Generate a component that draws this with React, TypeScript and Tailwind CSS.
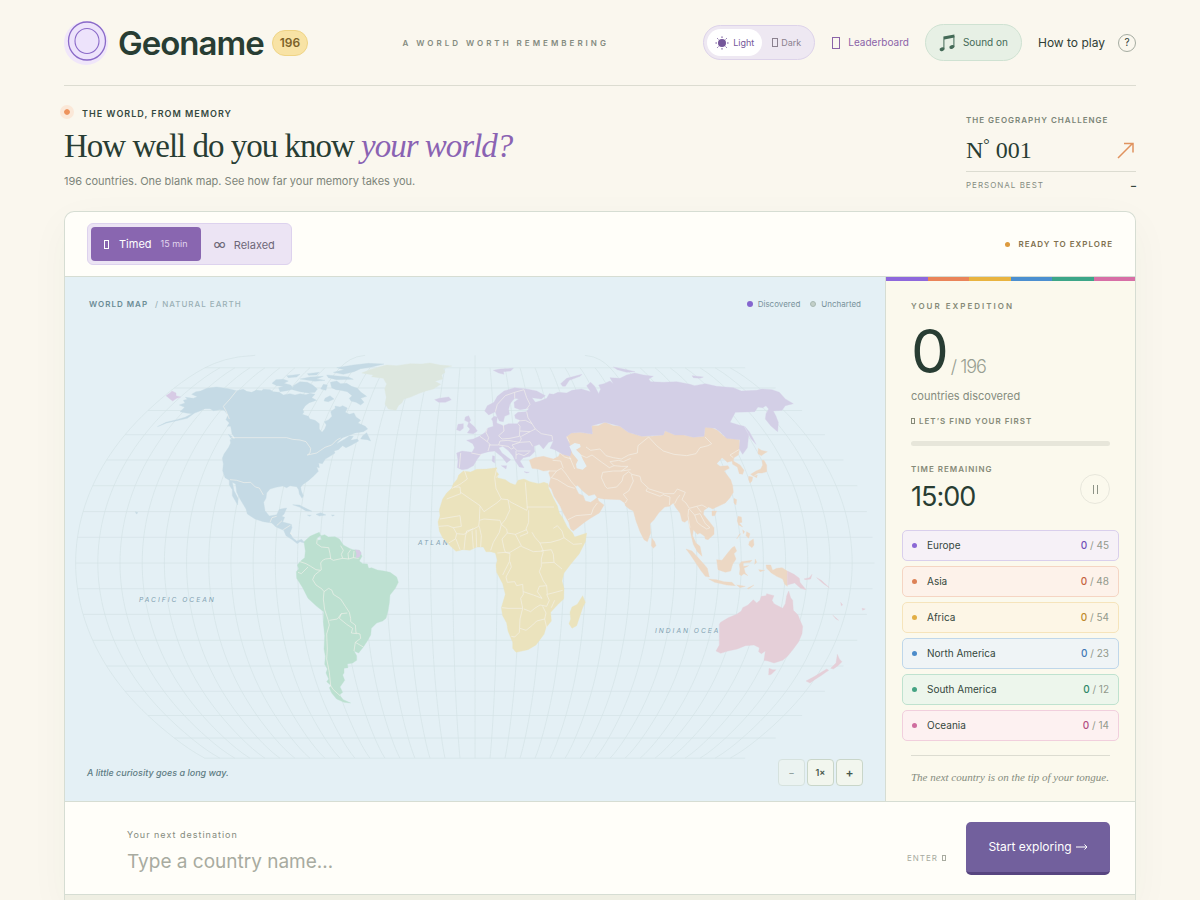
import type { FormEvent, ReactNode } from 'react';
import { useState } from 'react';
import clsx from 'clsx';

interface Region {
  name: string;
  found: number;
  total: number;
  row: string;
  dot: string;
  count: string;
}

interface LandGroup {
  name: string;
  fill: string;
  origin: string;
  land: string;
  borders?: string;
}

const regions: Region[] = [
  { name: 'Europe', found: 0, total: 45, row: 'bg-[#f6f1f7] border-[#d9cfec]', dot: 'bg-[#8b68d5]', count: 'text-[#7150b8]' },
  { name: 'Asia', found: 0, total: 48, row: 'bg-[#fdf2ea] border-[#f5d5c3]', dot: 'bg-[#dd8257]', count: 'text-[#c5633f]' },
  { name: 'Africa', found: 0, total: 54, row: 'bg-[#fdf6e6] border-[#f6e4bb]', dot: 'bg-[#e2ae45]', count: 'text-[#bf8a2c]' },
  { name: 'North America', found: 0, total: 23, row: 'bg-[#eff4f6] border-[#bfd7ea]', dot: 'bg-[#4b8bca]', count: 'text-[#3f78b5]' },
  { name: 'South America', found: 0, total: 12, row: 'bg-[#edf6ec] border-[#bfe2cf]', dot: 'bg-[#45a383]', count: 'text-[#2f8868]' },
  { name: 'Oceania', found: 0, total: 14, row: 'bg-[#fdf1f1] border-[#f1cfdd]', dot: 'bg-[#cf6d9f]', count: 'text-[#b34f82]' },
];

const spectrum = ['bg-[#8e68dc]', 'bg-[#ea8459]', 'bg-[#e9b440]', 'bg-[#4b8fd0]', 'bg-[#3ca688]', 'bg-[#d76fa6]'];

// Map units are a third of a pixel at the default panel width.
const MAP_W = 2460;
const MAP_H = 1572;
const CENTER_X = 1230;
const EQUATOR_Y = 858;
const SCALE = 438;

// Natural Earth projection
const project = (lon: number, lat: number) => {
  const l = (lon * Math.PI) / 180;
  const p = (lat * Math.PI) / 180;
  const p2 = p * p;
  const p4 = p2 * p2;
  const x = l * (0.8707 - 0.131979 * p2 + p4 * (-0.013791 + p4 * (0.003971 * p2 - 0.001529 * p4)));
  const y = p * (1.007226 + p2 * (0.015085 + p4 * (-0.044475 + 0.028874 * p2 - 0.005916 * p4)));
  return `${(CENTER_X + x * SCALE).toFixed(1)} ${(EQUATOR_Y - y * SCALE).toFixed(1)}`;
};

const buildGraticule = () => {
  const lines: string[] = [];
  for (let lon = -180; lon < 180; lon += 10) {
    const top = lon % 90 === 0 ? 90 : 80;
    const points: string[] = [];
    for (let lat = -80; lat <= top; lat += 2.5) points.push(project(lon, lat));
    lines.push('M' + points.join('L'));
  }
  for (let lat = -80; lat <= 80; lat += 10) {
    lines.push(`M${project(-180, lat)}L${project(180, lat)}`);
  }
  return lines.join('');
};

const graticule = buildGraticule();

const lands: LandGroup[] = [
  {
    name: 'Greenland',
    fill: '#dde7df',
    origin: 'translate(945 186)',
    land: 'M0 83L20 78L50 80L90 74L125 75L150 72L180 78L215 81L190 88L195 100L185 108L188 120L165 127L182 136L160 150L140 155L120 162L90 175L72 180L65 192L55 200L48 214L25 210L15 195L19 175L14 150L20 135L10 118L-25 113L-20 108L-55 102L-30 92Z',
  },
  {
    name: 'North America',
    fill: '#c5dae5',
    origin: 'translate(15 186)',
    land: 'M328 198L345 192L340 184L352 181L346 175L370 178L382 173L365 166L378 158L392 156L410 148L440 144L475 149L500 155L520 151L530 157L545 160L560 153L575 155L580 151L600 152L610 158L628 160L640 168L660 164L675 168L690 164L708 167L720 163L735 166L725 176L740 184L718 191L706 200L698 212L702 219L697 226L715 232L720 240L735 244L748 254L748 270L756 280L764 270L769 258L763 248L776 242L786 232L782 218L796 208L795 201L810 204L818 200L832 207L826 220L838 226L852 222L858 234L872 244L864 252L886 262L893 270L880 278L855 282L840 288L818 296L804 308L800 314L825 300L838 291L850 292L842 304L862 300L866 306L845 318L828 326L818 320L805 332L792 336L795 342L780 352L766 360L757 374L746 372L748 386L740 384L745 397L732 410L715 425L698 437L692 445L694 456L700 470L696 478L688 465L686 452L680 443L660 440L650 446L638 441L618 445L600 450L590 462L588 478L581 490L585 515L598 531L620 527L628 511L650 507L642 526L635 532L644 535L638 549L664 556L666 566L660 582L668 596L680 606L695 601L705 612L690 608L682 614L665 601L648 590L641 574L618 564L605 552L580 548L555 540L532 525L528 510L510 480L500 460L497 435L487 430L492 455L504 478L503 498L495 484L487 470L487 452L478 438L478 424L465 416L458 395L460 375L457 358L462 345L476 325L482 312L480 302L495 298L486 284L482 262L472 262L478 252L468 242L474 228L462 213L448 212L430 215L420 209L404 209L390 216L374 222L352 238L320 245L290 252L262 263L288 250L320 242L345 235L366 224L348 222L330 218L344 205ZM781 130L800 126L812 134L830 133L845 142L862 148L873 160L890 172L872 178L882 190L872 198L858 190L843 186L838 178L846 170L832 158L812 154L798 152L785 146ZM670 140L690 128L712 130L728 138L742 150L735 160L715 162L690 158L668 152ZM606 133L618 122L640 121L655 126L642 133L662 138L672 150L650 155L630 158L626 146L640 142L620 140ZM790 100L822 92L800 86L850 78L895 73L942 75L905 84L872 89L852 98L820 106ZM690 120L720 114L760 112L740 120L765 124L735 127ZM760 136L772 138L768 154L752 150ZM770 108L835 114L850 121L800 122L775 116ZM650 110L690 106L680 114L655 116ZM712 104L748 100L740 108L716 109ZM765 178L780 170L792 180L775 188L762 186ZM872 300L878 290L890 281L896 293L902 306L892 302ZM668 497L688 498L706 507L726 517L708 516L690 505ZM738 526L752 521L768 528L748 531ZM712 528L724 529L718 532ZM196 518L204 521L199 525ZM784 528L793 528L789 532ZM475 286L488 294L492 306L484 300Z',
    borders: 'M500 155L480 180L460 202L468 216L478 240M484 296L650 296L668 301L690 303L708 308L722 328L720 342L712 348L740 342L765 325L785 318L800 303L812 297M480 422L500 424L522 431L542 430L556 444L568 447L580 468M600 550L606 536L620 532M620 560L636 545M640 572L662 558M660 582L668 588',
  },
  {
    name: 'South America',
    fill: '#bce0d0',
    origin: 'translate(645 726)',
    land: 'M72 68L90 52L105 45L118 40L122 50L112 56L114 64L124 62L122 50L134 47L145 54L165 53L178 60L190 78L208 88L218 92L238 94L246 112L238 126L248 134L262 135L266 148L275 146L292 153L312 156L330 160L350 174L355 190L346 208L330 228L328 252L324 276L318 298L308 306L290 312L274 328L272 348L262 366L250 384L236 402L222 396L230 410L230 424L218 432L202 435L204 446L192 448L192 462L188 468L194 484L180 504L188 520L178 528L190 542L212 552L192 550L170 540L155 522L148 506L154 500L140 488L146 480L138 462L142 450L134 436L136 412L132 390L134 350L130 310L131 278L110 262L84 238L68 206L50 178L49 158L56 150L52 138L62 126L74 116L76 96Z',
    borders: 'M112 58L110 74L124 84L146 86L150 104L152 118L136 120L128 124L122 132L124 152L104 168L98 182L108 198L126 210L132 218L146 208L156 214L160 226L182 240L196 262L208 280L212 298L212 308L226 318L228 342L240 345L242 358L226 370L222 396M60 128L78 134L92 142L108 152L122 154M54 160L64 164L84 144M150 118L160 124L188 118L184 106L190 94L182 80M188 118L206 120L204 104L212 92M206 120L220 116L222 96M220 116L236 118M132 218L130 240L134 272L144 302L148 318L140 345L142 390L140 420L148 460L152 500L160 512L180 530M148 304L172 300L184 284L202 282M184 284L178 298L200 316L218 328L214 342L230 344M226 370L250 384',
  },
  {
    name: 'French Guiana',
    fill: '#d7cbe5',
    origin: 'translate(645 726)',
    land: 'M226 92L238 94L244 102L238 114L228 116L230 104Z',
  },
  {
    name: 'Africa',
    fill: '#ebe3bd',
    origin: 'translate(645 726)',
    land: 'M474 8L480 -10L478 -28L488 -60L500 -78L515 -92L520 -106L532 -120L536 -132L550 -144L572 -141L590 -149L620 -150L650 -154L650 -142L656 -134L652 -124L676 -118L690 -108L706 -102L714 -116L732 -120L750 -112L776 -106L792 -110L804 -106L806 -92L820 -62L832 -40L838 -18L848 -4L862 24L878 42L884 54L920 42L916 68L898 104L872 136L852 162L846 186L852 208L851 240L832 258L812 280L814 306L798 326L792 346L768 378L744 392L708 400L698 388L698 370L684 336L680 312L668 290L664 266L676 226L668 194L650 160L648 138L652 124L646 102L632 98L618 98L610 84L590 84L570 94L548 92L528 97L508 78L488 56L478 36ZM908 230L916 250L908 266L900 290L890 320L876 328L867 314L872 300L870 280L876 264L892 256Z',
    borders: 'M554 -144L562 -120L540 -104L516 -92M522 -96L540 -96L542 -76L500 -60M542 -80L600 -40L612 -22L650 -48L664 -60L648 -92L644 -124L650 -150M648 -124L656 -132M664 -60L684 -58L690 -52L740 -26L742 -32L736 -110M740 -36L822 -36M746 -26L746 10L738 30L744 42L720 52M684 -58L690 -28L676 2L664 16L680 30L682 42L706 46L740 32M598 4L612 0L660 4L664 16M598 4L596 22L580 30L560 36L556 54L552 92M600 -38L598 4M540 -10L480 0M540 -10L544 22L520 26L504 20L476 22M520 26L530 44L552 46L580 28M530 44L526 60L506 72M528 60L540 92M576 34L580 88M588 32L590 84M598 22L604 50L602 84M664 16L658 40L640 70L632 94M682 42L666 60L672 88L676 100L652 102M706 46L724 80L690 100L676 100M724 82L760 98L790 96L780 72L764 54L756 40M780 72L812 70L840 62L852 56L846 36L832 20L820 28M852 56L880 76L906 74M790 98L784 120L784 142L778 158L790 186L800 200M784 96L814 92L820 106L822 130L786 132M822 130L846 150M676 100L690 104L688 128L676 152L668 168M690 128L694 144L678 174L682 190L704 188L710 200L728 196L730 226L722 238L728 268L684 268L666 266M730 218L760 228L786 238L772 218L778 202L800 200L802 226L818 222L848 214M800 226L808 244L800 262L780 258L764 268L752 278L732 270M728 268L720 300L718 340L704 354L694 352M720 328L738 334L758 318L770 306L794 300L798 282L788 262M794 300L800 326M814 266L824 244',
  },
  {
    name: 'Asia',
    fill: '#ecd8c4',
    origin: 'translate(1485 216)',
    land: 'M-92 334L-76 326L-50 322L-20 330L-4 322L0 312L30 322L25 280L18 264L34 252L60 250L97 255L95 230L115 230L135 220L160 230L180 232L205 250L245 262L275 262L310 258L315 245L345 258L372 258L400 265L432 262L435 235L450 234L472 244L492 262L510 268L538 272L540 295L535 318L522 326L520 336L540 348L552 364L548 376L538 374L532 354L518 346L516 336L502 340L494 332L486 326L470 344L480 352L504 350L508 358L492 366L512 392L518 410L520 430L510 446L496 462L470 474L458 480L446 474L432 484L430 496L448 518L462 536L462 556L444 572L436 570L434 562L420 552L412 556L400 542L398 560L408 582L420 592L426 622L412 608L400 586L394 562L390 540L384 512L374 520L366 516L360 492L346 474L340 462L328 472L314 474L296 492L282 512L270 524L272 552L262 578L252 572L240 548L228 516L220 486L208 480L196 470L194 462L180 452L130 450L112 446L104 436L86 440L66 424L52 408L46 414L56 434L70 440L76 456L92 460L106 450L112 444L116 456L132 468L118 492L94 506L76 518L40 546L32 540L26 520L12 496L0 470L-18 442L-26 420L-34 412L-28 388L-34 372L-30 364L-50 366L-66 360L-84 358ZM595 298L604 304L622 308L612 314L604 320L594 314ZM606 334L612 334L620 348L620 368L606 372L594 372L580 382L572 376L588 366L602 360L608 348ZM566 382L578 384L576 396L570 402L566 392ZM582 382L592 378L590 386ZM522 448L530 452L528 468L522 462ZM456 486L470 486L464 500L456 500ZM276 568L284 578L288 590L280 598L274 590Z',
    borders: 'M20 262L28 280M78 294L92 304L120 300L138 320L160 326L184 330L206 318L232 312L234 290L266 264M266 264L290 290L310 306L342 316L380 320L408 314L420 296L444 290L455 284L435 264M62 318L80 326L96 318L120 336L148 356L162 350L150 338L176 334L190 338L212 328M162 350L184 352L204 352L184 366L160 366L128 370L124 386L136 412L142 418L170 414L186 396L190 380L206 368L216 376L240 382L244 398L268 420L300 430L314 434L342 434L352 420L376 430L366 452L378 462L388 478L410 472L426 468L440 476M184 366L212 362M214 376L220 396L206 426L190 436L202 452L196 462M262 418L258 426L300 442L312 436M312 438L330 444L328 468M344 464L352 448L360 438M386 480L384 500L390 536M388 480L404 498L420 494L436 524L450 536L440 540L424 530M404 498L412 520L424 530M410 472L424 490M28 322L44 360M-36 366L-10 366L4 358L16 372L34 398L48 414M-10 366L-26 386L-8 392L24 412L44 418M-22 334L2 336L10 358M0 312L14 324L34 330M24 512L48 500L94 496L100 478L112 462M520 326L510 318L540 300',
  },
  {
    name: 'Island Asia',
    fill: '#ecd8c4',
    origin: 'translate(1605 666)',
    land: 'M258 150L276 156L296 178L312 196L322 208L328 234L316 232L302 214L286 190L270 166ZM326 240L350 242L372 248L396 250L406 260L380 258L344 250ZM350 182L366 184L380 166L396 146L404 142L410 156L402 164L408 180L398 196L392 216L376 220L354 212ZM418 196L424 188L456 184L450 190L430 192L430 202L446 200L432 208L436 222L444 230L432 224L424 230L418 226L420 210ZM498 198L512 198L518 214L530 208L546 206L562 216L562 262L554 256L548 240L530 232L514 222L500 208ZM414 52L424 54L426 70L418 72L428 84L416 78L412 66ZM448 128L460 120L462 138L456 146L446 138ZM428 92L434 98L430 104ZM440 98L450 104L446 118L438 110ZM418 106L422 104L410 120ZM410 258L436 262L420 266ZM442 268L462 258L446 270ZM466 180L470 190L464 196ZM476 212L494 214L480 218Z',
  },
  {
    name: 'Europe',
    fill: '#d3cfe6',
    origin: 'translate(945 186)',
    land: 'M230 342L246 336L276 340L284 326L278 314L260 304L280 300L298 292L316 280L322 268L340 262L338 246L334 240L342 232L352 234L350 252L370 260L386 254L412 254L420 244L406 238L404 228L414 220L438 218L448 208L420 212L404 206L402 190L416 180L404 178L390 194L386 210L388 226L374 232L370 248L358 246L350 230L346 218L326 228L314 216L322 200L342 190L352 172L372 156L404 146L440 150L470 156L496 170L484 180L456 176L466 190L480 186L500 178L508 164L520 166L534 160L560 162L576 154L604 150L632 158L620 140L632 130L644 142L656 164L662 150L656 138L672 134L690 126L700 134L690 116L720 118L740 108L764 102L790 108L820 112L806 120L812 128L850 130L890 128L930 136L944 140L976 134L1010 142L1060 146L1084 156L1130 154L1146 150L1176 152L1198 160L1216 180L1240 194L1216 200L1206 214L1180 216L1188 232L1195 250L1193 278L1172 260L1156 240L1158 224L1166 210L1158 200L1148 206L1134 204L1124 218L1066 220L1050 250L1076 258L1092 262L1106 288L1102 326L1088 346L1078 330L1080 302L1040 298L1020 278L1005 268L975 265L972 292L940 295L912 288L885 288L855 275L850 288L785 292L745 280L720 262L675 250L635 260L637 285L600 280L574 282L558 294L568 314L576 330L570 352L548 346L524 332L510 328L520 306L506 310L490 330L478 316L462 322L464 338L450 352L430 356L420 366L432 386L418 384L406 366L398 350L384 334L368 322L356 326L366 342L392 362L380 372L366 354L344 336L326 338L304 344L292 360L280 380L262 390L246 392L232 386L234 364ZM256 234L266 230L272 244L268 250L284 264L292 276L280 284L262 282L270 270L262 262L266 250L254 244ZM234 256L250 254L250 268L240 276L230 272ZM164 182L178 178L206 174L214 182L196 190L176 190ZM340 94L360 90L400 88L392 96L370 98L372 106L356 102ZM542 134L560 118L606 106L600 112L568 124L556 142L548 142ZM364 380L380 380L378 390ZM338 350L344 352L344 372L336 366ZM432 398L448 400L440 402ZM700 84L730 90L765 98L740 100L712 92ZM936 110L970 114L960 118L940 116ZM1094 262L1108 278L1120 300L1128 316L1112 298Z',
    borders: 'M274 342L304 348M242 342L238 386M300 292L322 308L330 316L324 336M322 268L318 280L326 296L322 308M370 258L372 276L356 290L366 300L390 298L418 292L420 262L414 254M326 318L356 318L360 306L384 304L418 310L424 300L420 290M356 318L384 322L394 330L402 326L412 336L452 336M402 326L396 318L420 310L450 308L458 322M420 276L450 278L466 270L456 254L436 244L414 246M466 270L484 284L516 290L518 304M450 278L424 292M440 218L444 236L456 254M346 218L352 196L376 170L404 160L404 178M432 152L440 176L450 196L440 210M404 160L432 152M408 348L416 344L432 350L448 340M408 336L408 360',
  },
  {
    name: 'Chukotka',
    fill: '#d7cbe5',
    origin: 'translate(15 186)',
    land: 'M288 170L300 162L306 156L318 162L318 170L332 174L320 178L308 186L300 180Z',
  },
  {
    name: 'Oceania',
    fill: '#e5cfd8',
    origin: 'translate(1605 666)',
    land: 'M358 376L362 370L385 356L410 346L424 336L428 326L444 318L460 302L470 312L480 304L484 292L498 290L500 284L522 290L516 304L522 314L548 328L556 314L560 290L566 276L572 296L578 304L580 334L594 348L600 364L608 382L606 404L596 428L580 450L564 470L548 484L522 492L504 486L492 484L494 470L496 456L484 464L476 458L478 446L462 438L436 440L412 450L384 456L362 463L348 456L358 438L358 412ZM507 508L518 512L528 512L514 526L506 528ZM712 466L718 480L726 488L714 500L700 510L692 508L708 492ZM680 510L686 514L666 528L644 542L630 552L618 546L644 532ZM562 216L582 226L598 238L600 250L618 272L602 268L584 252L562 258ZM612 240L628 236L636 226L632 240L618 242ZM650 236L664 244L688 266L670 254ZM722 310L728 318L724 320ZM786 328L796 330L788 334ZM698 348L716 364L708 360Z',
  },
];

// Outlined box shown where a glyph has no picture
const Glyph = ({ className }: { className: string }) => (
  <span aria-hidden="true" className={clsx('inline-block shrink-0 border border-current', className)} />
);

const SunIcon = () => (
  <svg viewBox="0 0 14 14" className="size-3.5" fill="currentColor" aria-hidden="true">
    <circle cx="7" cy="7" r="4" />
    <path
      d="M7 .4v1.6M7 12v1.6M.4 7H2M12 7h1.6M2.3 2.3l1.1 1.1M10.6 10.6l1.1 1.1M2.3 11.7l1.1-1.1M10.6 3.4l1.1-1.1"
      stroke="currentColor"
      strokeWidth="1"
    />
  </svg>
);

const NotesIcon = () => (
  <svg viewBox="0 0 16 18" className="h-[18px] w-4" fill="currentColor" aria-hidden="true">
    <path d="M4.4 2.6 15.4.4v3L5.4 5.4v9.2h-1z" />
    <path d="M14.4 2h1v11h-1z" />
    <ellipse cx="3.1" cy="15.2" rx="2.6" ry="1.8" transform="rotate(-20 3.1 15.2)" />
    <ellipse cx="12.9" cy="13" rx="2.6" ry="1.8" transform="rotate(-20 12.9 13)" />
  </svg>
);

const Logo = () => (
  <svg viewBox="0 0 44 44" className="size-11" fill="none" aria-hidden="true">
    <circle cx="22" cy="22" r="22" fill="#f0e6fa" />
    <ellipse cx="23" cy="20" rx="18.5" ry="19" fill="#ede3fb" stroke="#8a6ac8" strokeWidth="1.3" />
    <ellipse cx="23" cy="20" rx="12" ry="12.5" stroke="#8a6ac8" strokeWidth="1.1" />
  </svg>
);

const Header = () => (
  <header className="flex h-[86px] items-center justify-between border-b border-[#dcdcd1]">
    <a href="#home" className="flex items-center">
      <Logo />
      <span className="ml-[10px] text-[33px] font-semibold leading-10 tracking-[-1px] text-[#283d33]">Geoname</span>
      <span className="ml-2 rounded-full border border-[#efd485] bg-[#f8e3a5] px-[7px] py-[2px] text-xs font-semibold leading-5 text-[#7c6228]">
        196
      </span>
    </a>
    <p className="text-[8px] font-semibold uppercase tracking-[3px] text-[#848b7f]">A world worth remembering</p>
    <nav className="flex items-center">
      <div className="flex h-[35px] items-center rounded-full border border-[#ddd3ea] bg-[#eee8f2] p-[3px]">
        <button
          type="button"
          className="flex h-[27px] items-center gap-1 rounded-full bg-white px-2 text-[9px] text-[#75569a]">
          <SunIcon />
          Light
        </button>
        <button type="button" className="flex h-[27px] items-center gap-[3px] px-[10px] text-[9px] text-[#8b818f]">
          <Glyph className="h-[9px] w-[6px]" />
          Dark
        </button>
      </div>
      <a href="#leaderboard" className="ml-[17px] flex items-center gap-2 text-[10px] text-[#8a63a8]">
        <Glyph className="h-3 w-2" />
        Leaderboard
      </a>
      <button
        type="button"
        className="ml-4 flex h-[37px] items-center gap-2 rounded-full border border-[#cfe2d2] bg-[#e7f0e5] px-[13px] text-[10px] text-[#446a57]">
        <NotesIcon />
        Sound on
      </button>
      <button type="button" className="ml-4 flex items-center gap-[13px] text-xs text-[#2f3d35]">
        How to play
        <span className="flex size-[18px] items-center justify-center rounded-full border border-[#a5aca1] text-[10px]">?</span>
      </button>
    </nav>
  </header>
);

const Intro = () => (
  <section className="flex justify-between pb-[18px] pt-[21px]">
    <div>
      <p className="flex items-center gap-3 text-[9px] font-semibold uppercase leading-[14px] tracking-[1px] text-[#34473d]">
        <span className="mb-1 size-[6px] rounded-full bg-[#ed935d] outline-4 outline-[#fbe8d8]" />
        The world, from memory
      </p>
      <h1 className="mt-[5px] font-['Liberation_Serif',serif] text-[33px] font-normal leading-10 tracking-[-1px] text-[#283d33]">
        How well do you know <em className="text-[#8a63b3]">your world?</em>
      </h1>
      <p className="mt-[7px] text-[11px] leading-4 text-[#7d857a]">
        196 countries. One blank map. See how far your memory takes you.
      </p>
    </div>
    <aside className="w-[170px] pt-[6px]">
      <p className="whitespace-nowrap text-[8px] font-semibold uppercase leading-[14px] tracking-[1px] text-[#7b8577]">
        The geography challenge
      </p>
      <div className="mt-[5px] flex h-10 items-center justify-between border-b border-[#dcdcd1] pb-1 font-['Liberation_Serif',serif] text-2xl text-[#283d33]">
        <span>
          N<sup className="text-base">°</sup>
          <span className="ml-[6px]">001</span>
        </span>
        <svg viewBox="0 0 20 20" className="size-5" fill="none" stroke="#e0935f" strokeWidth="1.5" aria-hidden="true">
          <path d="M2 18 16 4M8 3.5h9v9" />
        </svg>
      </div>
      <p className="mt-[5px] flex justify-between text-[8px] uppercase leading-4 tracking-[1px] text-[#858d82]">
        Personal best
        <span className="text-[10px] font-bold tracking-normal text-[#34473d]">–</span>
      </p>
    </aside>
  </section>
);

const Toolbar = () => (
  <div className="flex h-[65px] items-center justify-between border-b border-[#d6ddd3] px-[22px]">
    <div className="flex h-[42px] rounded-md border border-[#ddd2ee] bg-[#ece4f4] p-[3px]">
      <button
        type="button"
        className="flex h-[34px] items-center rounded bg-[#8966b0] px-[13px] text-[11px] text-white">
        <Glyph className="mr-[10px] h-[9px] w-[5px]" />
        Timed
        <span className="ml-[9px] text-[9px] text-[#e2d6ee]">15 min</span>
      </button>
      <button type="button" className="flex h-9 items-center gap-2 px-[13px] text-[11px] text-[#6e6878]">
        <span className="text-[13px]">∞</span>
        Relaxed
      </button>
    </div>
    <p className="flex items-center gap-2 text-[8px] font-semibold uppercase tracking-[1px] text-[#80704f]">
      <span className="size-[5px] rounded-full bg-[#dd9a3e]" />
      Ready to explore
    </p>
  </div>
);

const WorldMap = () => (
  <div className="relative min-w-0 flex-1 bg-[#e4f0f5]">
    <svg viewBox={`0 0 ${MAP_W} ${MAP_H}`} className="block h-auto w-full" role="img" aria-label="World map">
      <path d={graticule} fill="none" stroke="#d3e2e6" strokeWidth="2" />
      <g className="font-[Inter,sans-serif] italic" fill="#7f9fb0" fontSize="20" letterSpacing="6">
        <text x="222" y="975">PACIFIC OCEAN</text>
        <text x="1059" y="804">ATLANTIC OCEAN</text>
        <text x="1770" y="1068">INDIAN OCEAN</text>
      </g>
      {lands.map((group) => (
        <g key={group.name} transform={group.origin} strokeLinejoin="round">
          <path d={group.land} fill={group.fill} stroke={group.fill} strokeWidth="1" />
          {group.borders && <path d={group.borders} fill="none" stroke="#f3f2ec" strokeOpacity="0.75" strokeWidth="2.5" />}
        </g>
      ))}
      {/* Caspian Sea */}
      <path
        transform="translate(1485 216)"
        fill="#e4f0f5"
        d="M28 292L44 282L60 286L62 294L48 302L62 316L68 330L80 352L68 362L50 358L48 346L54 334L38 314Z"
      />
    </svg>
    <div className="absolute inset-x-6 top-[19px] flex items-center justify-between leading-4">
      <p className="text-[8px] font-semibold uppercase tracking-[1px] text-[#6b8c95]">
        World map <span className="ml-1 font-medium text-[#9bb0b5]">/ Natural Earth</span>
      </p>
      <ul className="flex gap-[10px] text-[8px] text-[#78929b]">
        <li className="flex items-center gap-[5px]">
          <span className="size-[6px] rounded-full bg-[#8566cf]" />
          Discovered
        </li>
        <li className="flex items-center gap-[5px]">
          <span className="size-[6px] rounded-full border border-[#a8b9b3] bg-[#c3cfc8]" />
          Uncharted
        </li>
      </ul>
    </div>
    <p className="absolute bottom-5 left-[22px] text-[9px] font-medium italic leading-4 text-[#5f7d84]">
      A little curiosity goes a long way.
    </p>
    <div className="absolute bottom-[15px] right-[22px] flex gap-[2px] text-[#46564c]">
      <MapButton label="Zoom out" faded>
        −
      </MapButton>
      <MapButton label="Reset zoom">1×</MapButton>
      <MapButton label="Zoom in">
        <span className="text-xs">+</span>
      </MapButton>
    </div>
  </div>
);

const MapButton = ({ label, faded, children }: { label: string; faded?: boolean; children: ReactNode }) => (
  <button
    type="button"
    aria-label={label}
    disabled={faded}
    className={clsx(
      'flex size-[27px] items-center justify-center rounded border border-[#c9d6c9] bg-[#f2f6ee] text-[9px] font-semibold',
      faded && 'opacity-50',
    )}>
    {children}
  </button>
);

const Expedition = () => (
  <aside className="flex w-[250px] shrink-0 flex-col border-l border-[#d6ddd3] bg-[#fbf9ed]">
    <div className="flex h-1">
      {spectrum.map((color) => (
        <span key={color} className={clsx('flex-1', color)} />
      ))}
    </div>
    <div className="flex flex-1 flex-col px-[25px] pt-[17px]">
      <p className="text-[8px] font-semibold uppercase leading-4 tracking-[2px] text-[#868a78]">Your expedition</p>
      <p className="mt-[7px] flex items-baseline leading-[60px] text-[#283d33]">
        <span className="text-[60px]">0</span>
        <span className="ml-[2px] text-lg font-light tracking-[-1px] text-[#989f92]">/ 196</span>
      </p>
      <p className="mt-[7px] text-[11px] leading-4 text-[#858c7e]">countries discovered</p>
      <p className="mt-[9px] flex items-center gap-1 text-[8px] font-semibold uppercase leading-4 tracking-[1px] text-[#868a78]">
        <Glyph className="h-[6px] w-1" />
        Let’s find your first
      </p>
      <div className="mt-3 h-[5px] rounded-full bg-[#e7e6da]" />
      <div className="mt-[15px] flex items-start justify-between">
        <div>
          <p className="text-[8px] font-semibold uppercase leading-4 tracking-[1px] text-[#868a78]">Time remaining</p>
          <p className="mt-1 text-[27px] leading-8 tracking-[-1px] text-[#283d33]">15:00</p>
        </div>
        <button
          type="button"
          aria-label="Pause"
          className="mt-[13px] flex size-[30px] items-center justify-center gap-[3px] rounded-full border border-[#e8e7dc]">
          <span className="h-[9px] w-px bg-[#8d9387]" />
          <span className="h-[9px] w-px bg-[#8d9387]" />
        </button>
      </div>
      <ul className="-mx-[9px] mt-[17px] flex flex-col gap-[5px]">
        {regions.map((region) => (
          <li
            key={region.name}
            className={clsx('flex h-[31px] items-center rounded-[5px] border px-[9px] text-[10px]', region.row)}>
            <span className={clsx('size-[5px] rounded-full', region.dot)} />
            <span className="ml-[10px] flex-1 text-[#34473d]">{region.name}</span>
            <span className="text-[#92998c]">
              <span className={clsx('font-medium', region.count)}>{region.found}</span> / {region.total}
            </span>
          </li>
        ))}
      </ul>
      <p className="mt-[14px] whitespace-nowrap border-t border-[#dcdcd1] pt-[13px] font-['Liberation_Serif',serif] text-[11px] italic leading-4 text-[#858c7e]">
        The next country is on the tip of your tongue.
      </p>
    </div>
  </aside>
);

const GuessForm = () => {
  const [guess, setGuess] = useState('');
  const handleSubmit = (event: FormEvent<HTMLFormElement>) => {
    event.preventDefault();
    setGuess('');
  };

  return (
    <form
      className="flex h-[94px] items-center border-y border-[#d6ddd3] pl-[62px] pr-[25px]"
      onSubmit={handleSubmit}>
      <div className="min-w-0 flex-1 pt-2">
        <label htmlFor="guess" className="block text-[9px] leading-4 tracking-[1px] text-[#858c7e]">
          Your next destination
        </label>
        <input
          id="guess"
          type="text"
          value={guess}
          onChange={(e) => setGuess(e.target.value)}
          placeholder="Type a country name…"
          className="mt-[2px] block h-8 w-full bg-transparent text-[19px] text-[#283d33] outline-none placeholder:text-[#a8aba0]"
        />
      </div>
      <span className="mr-5 mt-5 flex items-center gap-1 text-[8px] uppercase leading-4 tracking-[1px] text-[#a8aba0]">
        Enter
        <Glyph className="h-[6px] w-1" />
      </span>
      <button
        type="submit"
        className="flex h-[53px] w-36 items-center justify-center gap-1 rounded-[5px] border-b-3 border-[#574580] bg-[#72609d] text-xs text-white">
        Start exploring
        <svg viewBox="0 0 12 8" className="h-2 w-3" fill="none" stroke="currentColor" aria-hidden="true">
          <path d="M0 4h11M8.500 1.500 11 4 8.500 6.500" />
        </svg>
      </button>
    </form>
  );
};

export default function App() {
  return (
    <div className="flex min-h-screen flex-col bg-[#faf7ee] px-16 font-[Inter,sans-serif]">
      <Header />
      <Intro />
      <main className="flex flex-1 flex-col overflow-hidden rounded-t-[10px] border border-b-0 border-[#d6ddd3] bg-[#fffef9] shadow-[0_12px_40px_rgba(60,70,40,0.04)]">
        <Toolbar />
        <div className="flex">
          <WorldMap />
          <Expedition />
        </div>
        <GuessForm />
        <div className="min-h-1 flex-1 bg-[#efefe3]" />
      </main>
    </div>
  );
}
